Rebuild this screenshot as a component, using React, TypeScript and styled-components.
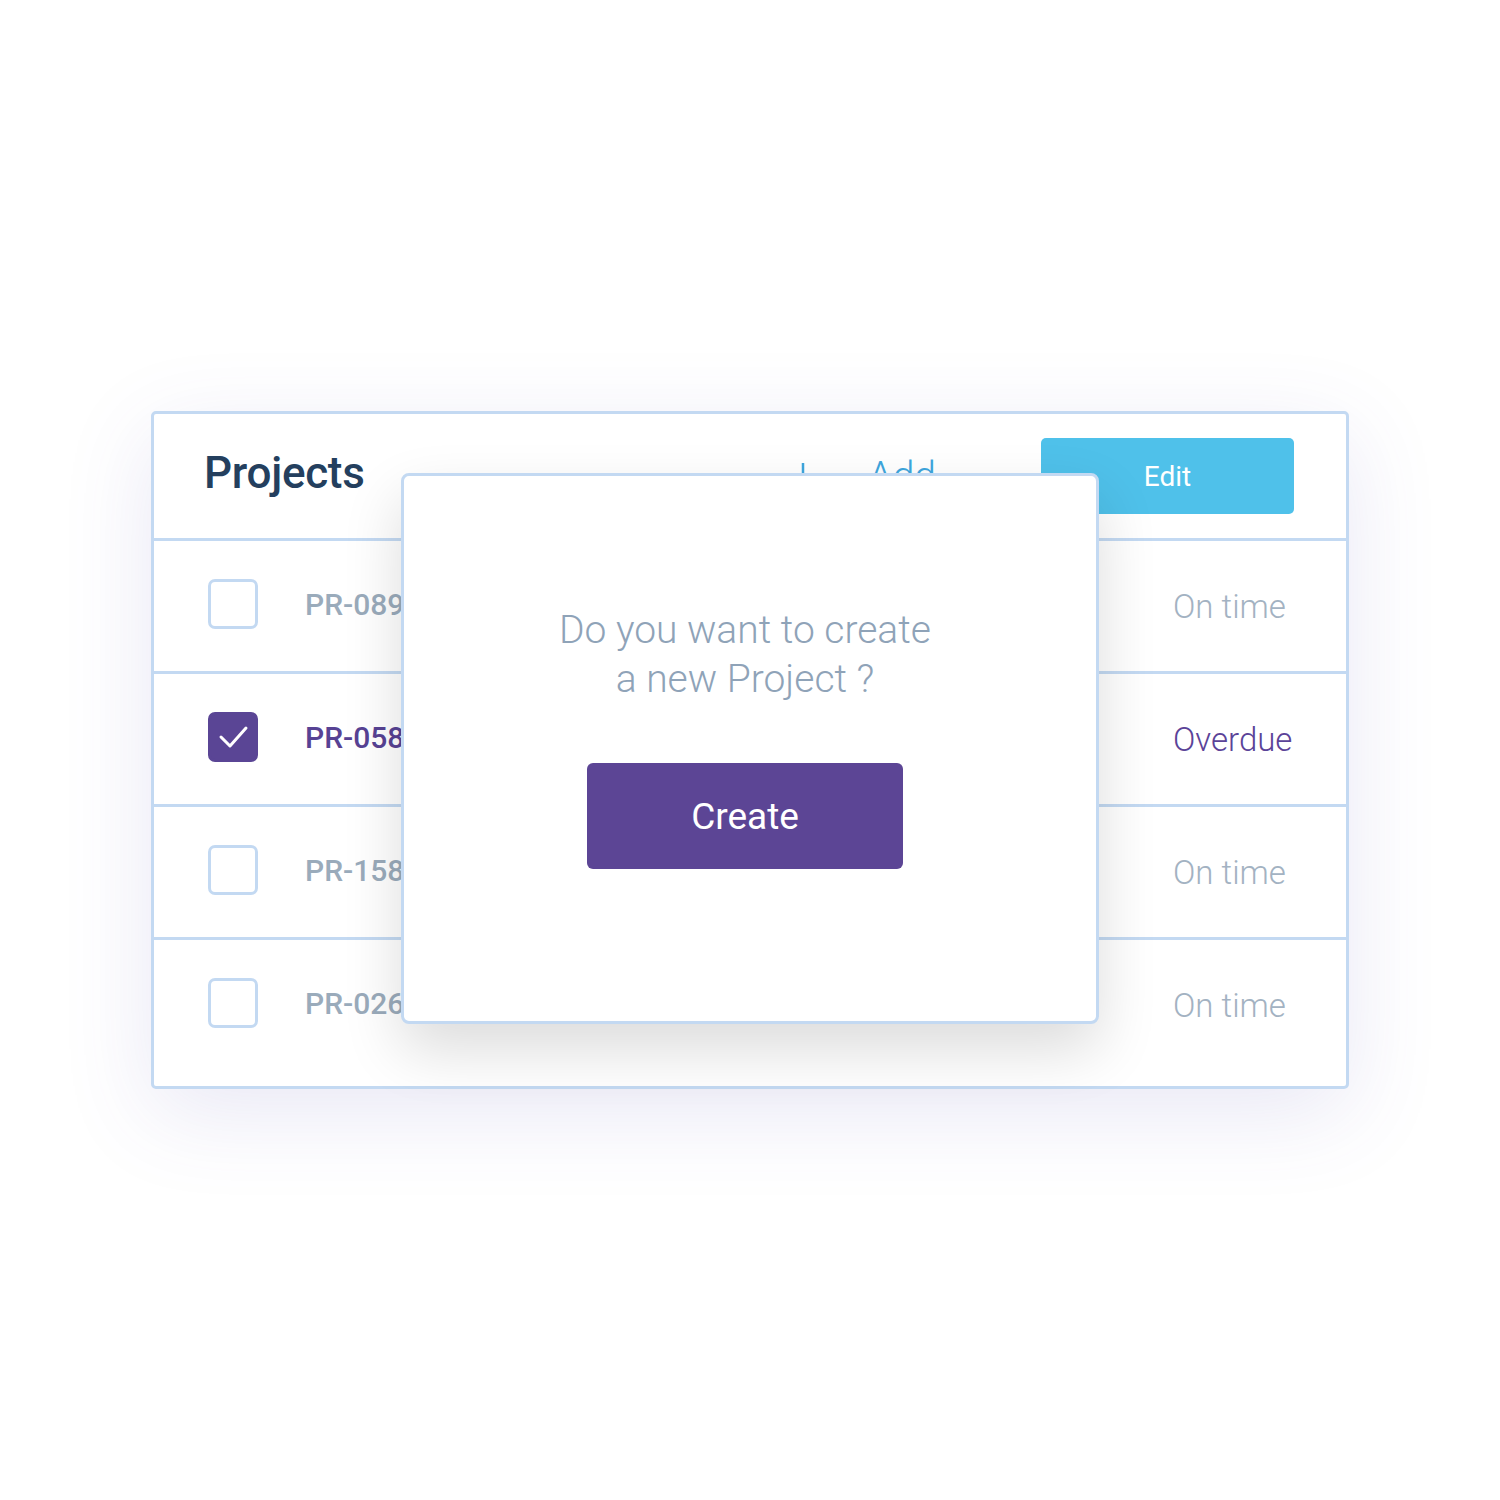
import React from 'react';
import styled, { createGlobalStyle } from 'styled-components';

const GlobalStyle = createGlobalStyle`
  html, body {
    margin: 0;
    padding: 0;
    background: #ffffff;
    font-family: Roboto, "Liberation Sans", Arial, sans-serif;
  }
`;

const Stage = styled.div`
  width: 1500px;
  height: 1500px;
  box-sizing: border-box;
  padding-top: 411px;
  display: flex;
  align-items: flex-start;
  justify-content: center;
`;

const Card = styled.div`
  position: relative;
  width: 1192px;
  border: 3px solid #c3d9f2;
  border-radius: 5px;
  background: #ffffff;
  padding-bottom: 16px;
  box-shadow: 0 24px 90px rgba(86, 76, 180, 0.13);
`;

const Header = styled.div`
  height: 124px;
  padding: 0 52px 0 50px;
  display: flex;
  align-items: center;
  border-bottom: 3px solid #c3d9f2;
`;

const Title = styled.h1`
  margin: 0 0 6px;
  flex: 1;
  font-size: 44px;
  font-weight: 500;
  letter-spacing: -0.3px;
  color: #243f5e;
`;

const AddLink = styled.div`
  display: flex;
  align-items: center;
  gap: 50px;
  margin-right: 105px;
  color: #3ea6de;
  font-size: 39px;
  font-weight: 300;
`;

const EditButton = styled.button`
  width: 253px;
  height: 76px;
  border: none;
  border-radius: 5px;
  background: #4fc1ea;
  color: #ffffff;
  font-family: inherit;
  font-size: 28px;
  font-weight: 400;
`;

const Row = styled.div<{ $last?: boolean }>`
  height: 130px;
  padding: 0 52px 0 54px;
  display: flex;
  align-items: center;
  border-bottom: ${(p) => (p.$last ? 'none' : '3px solid #c3d9f2')};
`;

const Box = styled.div<{ $checked?: boolean }>`
  width: 50px;
  height: 50px;
  margin-bottom: 4px;
  box-sizing: border-box;
  border-radius: 7px;
  border: 3px solid ${(p) => (p.$checked ? '#5a4595' : '#c3d9f2')};
  background: ${(p) => (p.$checked ? '#5a4595' : '#ffffff')};
  display: flex;
  align-items: center;
  justify-content: center;
`;

const Code = styled.span<{ $active?: boolean }>`
  margin: 0 0 4px 47px;
  flex: 1;
  font-size: 30px;
  font-weight: 500;
  color: ${(p) => (p.$active ? '#574294' : '#9aabbb')};
`;

const Status = styled.span<{ $late?: boolean }>`
  width: 121px;
  font-size: 33px;
  font-weight: 300;
  color: ${(p) => (p.$late ? '#5b4398' : '#a3b2c2')};
`;

const Modal = styled.div`
  position: absolute;
  left: 247px;
  top: 59px;
  width: 692px;
  height: 415px;
  padding-top: 130px;
  border: 3px solid #c3d9f2;
  border-radius: 8px;
  background: #ffffff;
  box-shadow: 0 26px 60px rgba(0, 0, 0, 0.14);
  display: flex;
  flex-direction: column;
  align-items: center;
`;

const Question = styled.p`
  margin: 0 10px 0 0;
  text-align: center;
  font-size: 39px;
  font-weight: 300;
  line-height: 49px;
  color: #8fa3b8;
`;

const CreateButton = styled.button`
  margin: 59px 10px 0 0;
  width: 316px;
  height: 106px;
  border: none;
  border-radius: 6px;
  background: #5c4595;
  color: #ffffff;
  font-family: inherit;
  font-size: 37px;
  font-weight: 400;
`;

const Plus = () => (
  <svg width="30" height="30" viewBox="0 0 30 30">
    <path d="M15 2v26M2 15h26" stroke="#3ea6de" strokeWidth="2.5" fill="none" />
  </svg>
);

const Check = () => (
  <svg width="34" height="30" viewBox="0 0 34 30">
    <path d="M5 15l9 9L30 6" stroke="#ffffff" strokeWidth="3" fill="none" strokeLinecap="round" strokeLinejoin="round" />
  </svg>
);

const projects = [
  { code: 'PR-089', status: 'On time', checked: false },
  { code: 'PR-058', status: 'Overdue', checked: true },
  { code: 'PR-158', status: 'On time', checked: false },
  { code: 'PR-026', status: 'On time', checked: false },
];

export default function App() {
  return (
    <>
      <GlobalStyle />
      <Stage>
        <Card>
          <Header>
            <Title>Projects</Title>
            <AddLink>
              <Plus />
              <span>Add</span>
            </AddLink>
            <EditButton>Edit</EditButton>
          </Header>
          {projects.map((p, i) => (
            <Row key={p.code} $last={i === projects.length - 1}>
              <Box $checked={p.checked}>{p.checked && <Check />}</Box>
              <Code $active={p.checked}>{p.code}</Code>
              <Status $late={p.status === 'Overdue'}>{p.status}</Status>
            </Row>
          ))}
          <Modal>
            <Question>
              Do you want to create
              <br />a new Project ?
            </Question>
            <CreateButton>Create</CreateButton>
          </Modal>
        </Card>
      </Stage>
    </>
  );
}
